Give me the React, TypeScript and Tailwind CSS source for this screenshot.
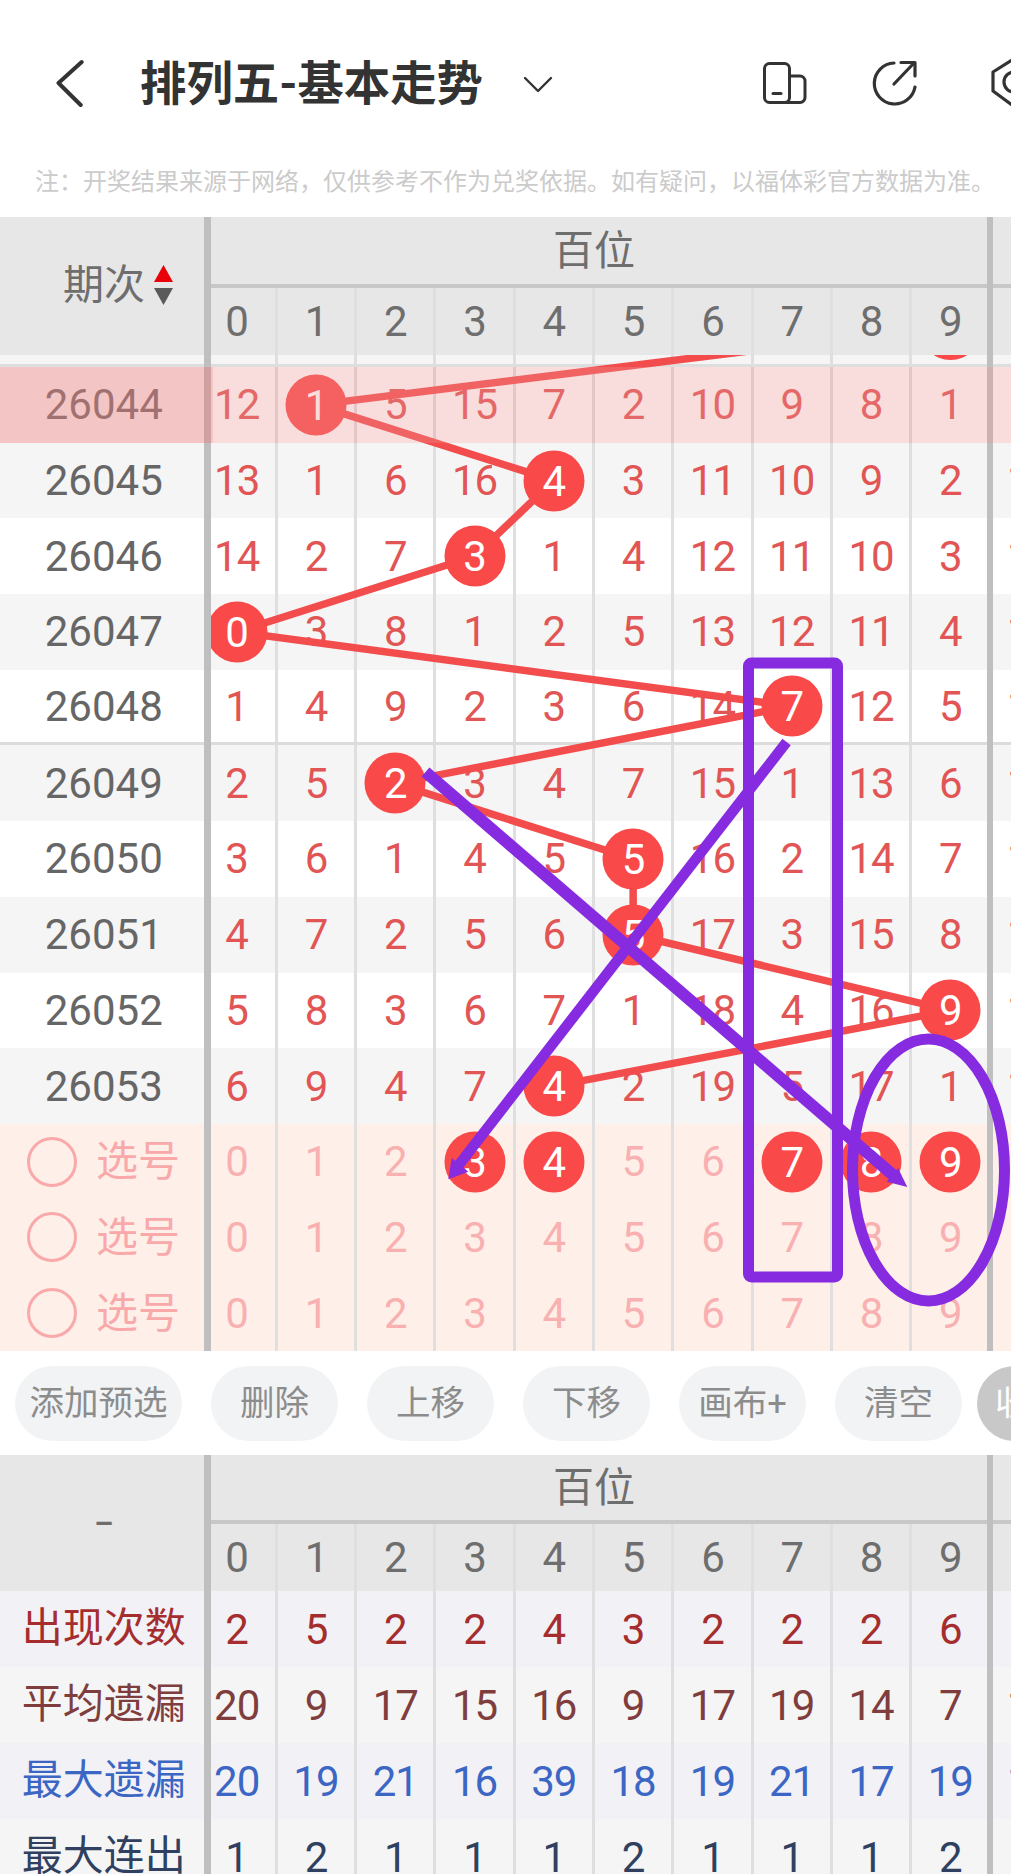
import React from 'react';

const COL_X = (i: number) => 236.65 + 79.3 * i;
const ROW_Y = (i: number) => 367 + 75.7 * (i + 0.5);

interface TrendRow {
  issue: string;
  nums: number[];
  ball: number; // column of the drawn ball
  next: string;
  divider?: boolean;
}

const rows: TrendRow[] = [
  { issue: '26044', nums: [12, 1, 5, 15, 7, 2, 10, 9, 8, 1], ball: 1, next: '' },
  { issue: '26045', nums: [13, 1, 6, 16, 4, 3, 11, 10, 9, 2], ball: 4, next: '12' },
  { issue: '26046', nums: [14, 2, 7, 3, 1, 4, 12, 11, 10, 3], ball: 3, next: '13' },
  { issue: '26047', nums: [0, 3, 8, 1, 2, 5, 13, 12, 11, 4], ball: 0, next: '14' },
  { issue: '26048', nums: [1, 4, 9, 2, 3, 6, 14, 7, 12, 5], ball: 7, next: '15', divider: true },
  { issue: '26049', nums: [2, 5, 2, 3, 4, 7, 15, 1, 13, 6], ball: 2, next: '16' },
  { issue: '26050', nums: [3, 6, 1, 4, 5, 5, 16, 2, 14, 7], ball: 5, next: '17' },
  { issue: '26051', nums: [4, 7, 2, 5, 6, 5, 17, 3, 15, 8], ball: 5, next: '18' },
  { issue: '26052', nums: [5, 8, 3, 6, 7, 1, 18, 4, 16, 9], ball: 9, next: '19' },
  { issue: '26053', nums: [6, 9, 4, 7, 4, 2, 19, 5, 17, 1], ball: 4, next: '10' },
];

const digits = [0, 1, 2, 3, 4, 5, 6, 7, 8, 9];
const picks = [[3, 4, 7, 8, 9], [], []];

const stats = [
  { label: '出现次数', nums: [2, 5, 2, 2, 4, 3, 2, 2, 2, 6], next: '', text: 'text-[#a52d2d]', bg: 'bg-[#f1f1f6]' },
  { label: '平均遗漏', nums: [20, 9, 17, 15, 16, 9, 17, 19, 14, 7], next: '12', text: 'text-[#7f3d3d]', bg: 'bg-[#f5f5f5]' },
  { label: '最大遗漏', nums: [20, 19, 21, 16, 39, 18, 19, 21, 17, 19], next: '15', text: 'text-[#3b66c4]', bg: 'bg-[#f1f1f6]' },
  { label: '最大连出', nums: [1, 2, 1, 1, 1, 2, 1, 1, 1, 2], next: '', text: 'text-[#2f4060]', bg: 'bg-[#f5f5f5]' },
];

const Ball = ({ value }: { value: number }) => (
  <div className="absolute left-1/2 top-1/2 z-20 flex h-[61px] w-[61px] -translate-x-1/2 -translate-y-1/2 items-center justify-center rounded-full bg-[#f94949] text-white">
    {value}
  </div>
);

const Cell = ({ children, className = '' }: { children?: React.ReactNode; className?: string }) => (
  <div className={`relative flex h-full w-[79.3px] shrink-0 items-center justify-center border-r-[3px] border-[#dfdfdf] text-[42px] tracking-[-1px] ${className}`}>
    {children}
  </div>
);

const GroupHeader = ({ topH, left }: { topH: string; left: React.ReactNode }) => (
  <div className="flex bg-[#e7e7e7] text-[#6e6e6e]">
    <div className="flex w-[198.5px] shrink-0 items-center">{left}</div>
    <div className="flex min-w-0 flex-1 flex-col">
      <div className={`flex w-[791px] items-center justify-center pt-[2px] text-[41px] ${topH}`}>百位</div>
      <div className="ml-[12.5px] h-[4px] bg-[#c8c8c8]" />
      <div className="flex h-[67px]">
        {digits.map((d) => (
          <Cell key={d} className="border-[#d2d2d2]">{d}</Cell>
        ))}
        <Cell className="border-[#d2d2d2]" />
      </div>
    </div>
  </div>
);

const Strips = () => (
  <>
    <div className="absolute bottom-0 left-[204px] top-0 z-[25] w-[6.5px] bg-[#bfbfbf]" />
    <div className="absolute bottom-0 left-[987px] top-0 z-[25] w-[6px] bg-[#bfbfbf]" />
  </>
);

const ChartLines = () => {
  const points = [[COL_X(9), 326], ...rows.map((r, i) => [COL_X(r.ball), ROW_Y(i) - (r.divider ? 1.5 : 0)])];
  return (
    <svg className="pointer-events-none absolute left-0 top-0 z-10" width={1011} height={996} viewBox="0 355 1011 996">
      <polyline points={points.map((p) => p.join(',')).join(' ')} fill="none" stroke="#f34c4c" strokeWidth={7.5} />
    </svg>
  );
};

const Marks = () => (
  <svg className="pointer-events-none absolute left-0 top-0 z-40" width={1011} height={996} viewBox="0 355 1011 996">
    <rect x={748.5} y={663} width={89} height={614} rx={3} fill="none" stroke="#862be0" strokeWidth={11} />
    <ellipse cx={928.5} cy={1170} rx={76} ry={131} fill="none" stroke="#862be0" strokeWidth={11} />
    <line x1={786.6} y1={742} x2={458} y2={1166} stroke="#862be0" strokeWidth={10.5} />
    <polygon points="448.3,1179.3 451.7,1158 468.3,1171.7" fill="#862be0" />
    <line x1={425.5} y1={772} x2={893} y2={1175} stroke="#862be0" strokeWidth={12} />
    <polygon points="907.3,1187 886.7,1181.7 898,1168" fill="#862be0" />
  </svg>
);

const TopBar = () => (
  <div className="flex h-[166px] items-center pl-[56px]">
    <svg width={28} height={48} viewBox="0 0 28 48" className="shrink-0" fill="none" stroke="#333" strokeWidth={4} strokeLinecap="round" strokeLinejoin="round">
      <path d="M25.7 3 L2.5 24 L24.7 46" />
    </svg>
    <div className="ml-[56px] mt-[2px] shrink-0 whitespace-nowrap text-[46.4px] font-bold leading-none text-[#333]">排列五-基本走势</div>
    <svg width={30} height={17} viewBox="0 0 30 17" className="ml-[40px] mt-[2px] shrink-0" fill="none" stroke="#333" strokeWidth={2.4} strokeLinecap="round" strokeLinejoin="round">
      <path d="M2 2 L15 15 L28 2" />
    </svg>
    <svg width={44} height={42} viewBox="0 0 44 42" className="ml-[210px] shrink-0" fill="none" stroke="#333" strokeWidth={3} strokeLinecap="round" strokeLinejoin="round">
      <rect x={1.5} y={1.5} width={25} height={39} rx={5} />
      <path d="M26.5 14 H37 a5 5 0 0 1 5 5 V35.5 a5 5 0 0 1 -5 5 H22" />
      <path d="M10 31.5 H18" />
    </svg>
    <svg width={46} height={46} viewBox="0 0 46 46" className="ml-[65px] shrink-0" fill="none" stroke="#333" strokeWidth={3.2} strokeLinecap="round" strokeLinejoin="round">
      <path d="M22 3 A20.5 20.5 0 1 0 43 27" />
      <path d="M22 24 L42 3" />
      <path d="M29 2.5 H43 V16" />
    </svg>
    <svg width={40} height={50} viewBox="0 0 40 50" className="ml-[73px] shrink-0" fill="none" stroke="#333" strokeWidth={3.2} strokeLinecap="round" strokeLinejoin="round">
      <path d="M21 2 L2 14 V33 L21 47 L40 33 V14 Z" />
      <circle cx={23} cy={24} r={10} />
    </svg>
  </div>
);

const MainTable = () => (
  <div className="relative isolate">
    <Strips />
    <GroupHeader
      topH="h-[67px]"
      left={
        <div className="flex items-center pl-[63px]">
          <span className="text-[41px]">期次</span>
          <svg width={19} height={40} viewBox="0 0 19 40" className="ml-[9px] mt-[-2px]">
            <path d="M9.5 0 L19 17 H0 Z" fill="#e8000b" />
            <path d="M0 23 H19 L9.5 40 Z" fill="#5a5a5a" />
          </svg>
        </div>
      }
    />
    <div className="relative h-[996px] overflow-hidden">
      <div className="flex h-[9px] bg-[#f5f5f5]">
        <div className="w-[198.5px] shrink-0" />
        {digits.map((d) => (
          <Cell key={d} />
        ))}
      </div>
      <div className="h-[3px] bg-[#dedede]" />
      <div className="absolute left-[919.5px] top-[-56.5px] z-20 h-[61px] w-[61px] rounded-full bg-[#f94949]" />
      {rows.map((r, i) => (
        <div
          key={r.issue}
          className={`flex h-[75.7px] text-[#e25555] ${i % 2 === 1 ? 'bg-[#f5f5f5]' : 'bg-white'} ${r.divider ? 'border-b-[3px] border-[#dcdcdc]' : ''}`}
        >
          <div className="flex h-full w-[198.5px] shrink-0 items-center justify-center pl-[9px] text-[42px] text-[#666]">{r.issue}</div>
          {r.nums.map((n, c) => (
            <Cell key={c}>{c === r.ball ? <Ball value={n} /> : n}</Cell>
          ))}
          <Cell>{r.next}</Cell>
        </div>
      ))}
      {picks.map((balls, i) => (
        <div key={i} className="flex h-[75.7px] bg-[#feefe9] text-[#f9b0b0]">
          <div className="flex h-full w-[198.5px] shrink-0 items-center pl-[27px] text-[42px] text-[#f9a9a9]">
            <div className="h-[50px] w-[50px] rounded-full border-[3px] border-[#f9a9a9]" />
            <span className="ml-[19px]">选号</span>
          </div>
          {digits.map((d) => (
            <Cell key={d}>{balls.includes(d) ? <Ball value={d} /> : d}</Cell>
          ))}
          <Cell />
        </div>
      ))}
      <ChartLines />
      {/* highlighted row sits over the numbers and the drawn line */}
      <div className="absolute left-0 right-0 top-[12px] z-30 h-[75.7px] bg-[rgba(236,145,145,0.32)]" />
      <div className="absolute left-0 top-[12px] z-30 h-[75.7px] w-[213px] bg-[rgba(225,105,105,0.2)]" />
      <Marks />
    </div>
  </div>
);

const Toolbar = () => (
  <div className="flex h-[104px] items-start gap-[29px] pl-[15px] pt-[15px]">
    {['添加预选', '删除', '上移', '下移', '画布+', '清空'].map((label, i) => (
      <div
        key={label}
        className={`flex h-[75px] shrink-0 items-center justify-center rounded-full bg-[#f2f3f5] text-[34.5px] text-[#8c8c8c] ${i === 0 ? 'w-[167px]' : 'w-[127px]'}`}
      >
        {label}
      </div>
    ))}
    <div className="ml-[-14px] flex h-[75px] w-[127px] shrink-0 items-center whitespace-nowrap rounded-full bg-[#c8c8c8] pl-[18px] text-[34.5px] text-white">收起</div>
  </div>
);

const StatsTable = () => (
  <div className="relative isolate">
    <Strips />
    <GroupHeader topH="h-[65px]" left={<div className="w-full pl-[9px] text-center text-[30px] font-bold">–</div>} />
    {stats.map((s) => (
      <div key={s.label} className={`flex h-[76px] ${s.bg} ${s.text}`}>
        <div className="flex h-full w-[198.5px] shrink-0 items-center justify-center pl-[9px] text-[41px]">{s.label}</div>
        {s.nums.map((n, c) => (
          <Cell key={c}>{n}</Cell>
        ))}
        <Cell>{s.next}</Cell>
      </div>
    ))}
  </div>
);

export default function App() {
  return (
    <div className="h-[1874px] w-[1011px] overflow-hidden bg-white font-['Roboto','Noto_Sans_CJK_SC',sans-serif]">
      <TopBar />
      <div className="flex h-[51px] items-start whitespace-nowrap pl-[35px] text-[24px] leading-[32px] text-[#cbcbcb]">
        注：开奖结果来源于网络，仅供参考不作为兑奖依据。如有疑问，以福体彩官方数据为准。
      </div>
      <MainTable />
      <Toolbar />
      <StatsTable />
    </div>
  );
}
